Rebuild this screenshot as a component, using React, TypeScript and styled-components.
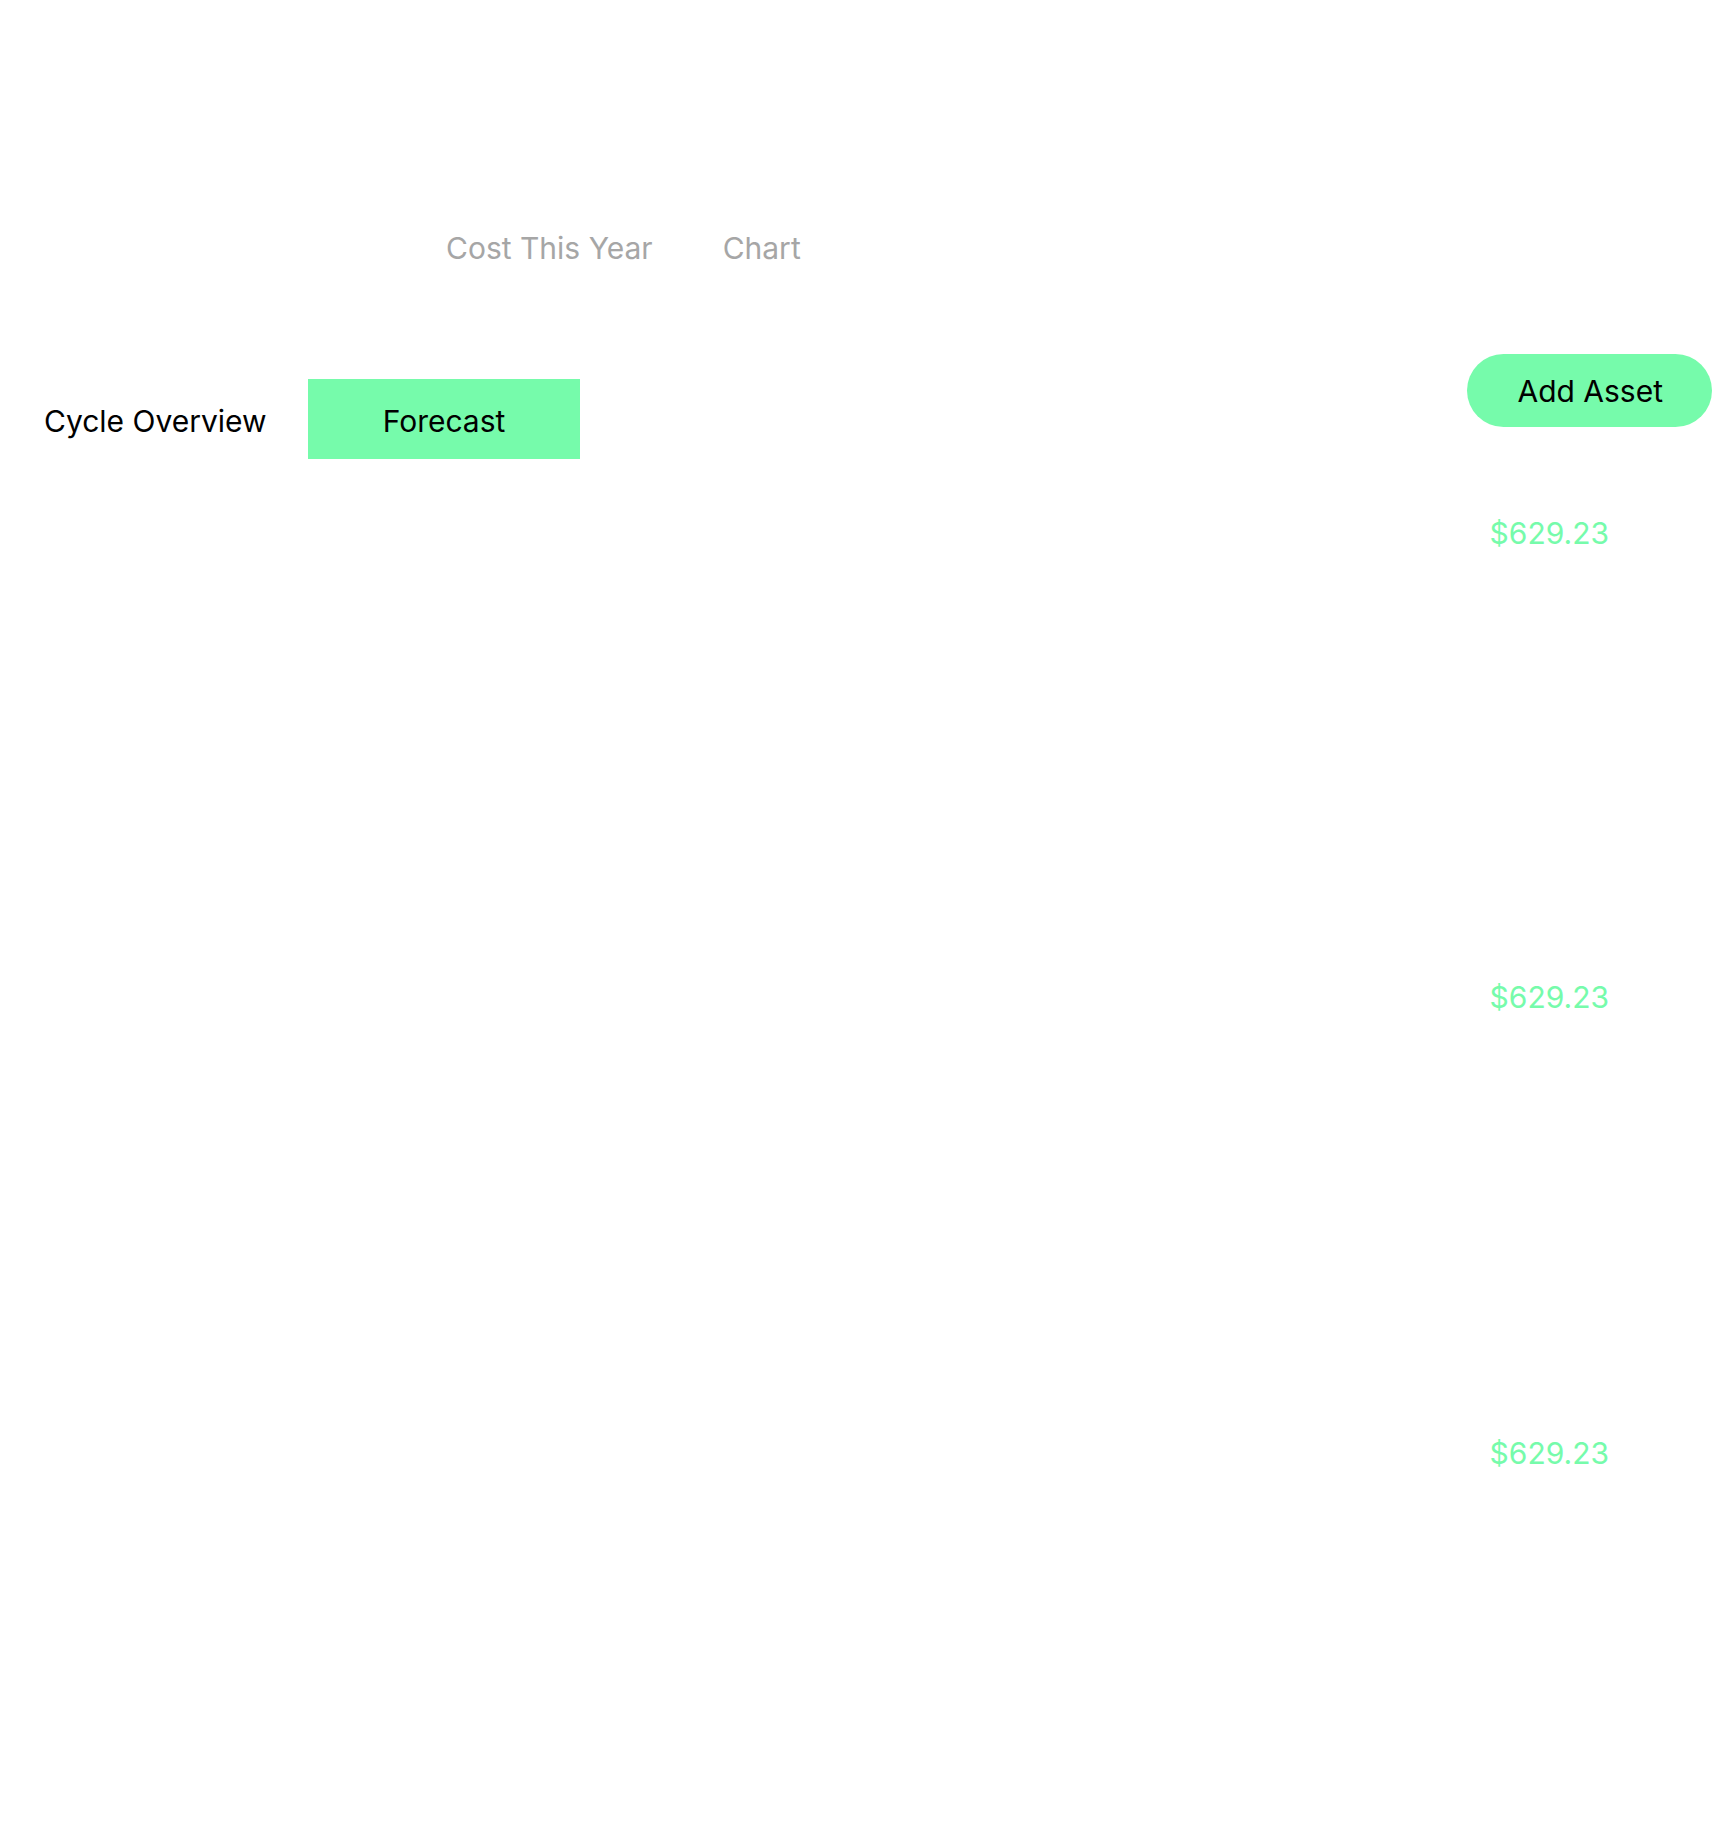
import React from "react";
import styled, { createGlobalStyle } from "styled-components";

const GlobalStyle = createGlobalStyle`
  html, body {
    margin: 0;
    padding: 0;
    background: #ffffff;
  }
  body {
    font-family: Inter, "Noto Sans", "Liberation Sans", sans-serif;
    color: #000;
  }
`;

const Page = styled.div`
  width: 1712px;
  min-height: 1835px;
  display: flex;
  flex-direction: column;
  box-sizing: border-box;
  padding-top: 230px;
`;

const SummaryBar = styled.div`
  display: flex;
  gap: 70px;
  padding-left: 446px;
`;

const SummaryLabel = styled.span`
  font-size: 30px;
  line-height: normal;
  color: #a6a6a6;
`;

const Toolbar = styled.div`
  display: flex;
  justify-content: space-between;
  align-items: flex-start;
  margin-top: 88px;
`;

const Tabs = styled.div`
  display: flex;
  gap: 41px;
  padding-left: 44px;
  margin-top: 25px;
`;

const Tab = styled.button<{ $active?: boolean }>`
  height: 80px;
  border: none;
  margin: 0;
  padding: 4px ${(p) => (p.$active ? "75px" : "0")} 0;
  background: ${(p) => (p.$active ? "#76fbab" : "transparent")};
  font-family: inherit;
  font-size: 30px;
  color: #000;
  cursor: pointer;
`;

const AddButton = styled.button`
  height: 73px;
  padding: 0 49px 0 50px;
  border: none;
  border-radius: 37px;
  background: #76fbab;
  font-family: inherit;
  font-size: 30px;
  color: #000;
  cursor: pointer;
`;

const List = styled.div`
  display: flex;
  flex-direction: column;
  padding-top: 56px;
`;

const Row = styled.div<{ $height?: number }>`
  display: flex;
  justify-content: flex-end;
  padding-right: 103px;
  height: ${(p) => (p.$height ? `${p.$height}px` : "auto")};
`;

const Amount = styled.span`
  font-size: 30px;
  line-height: normal;
  color: #76fbab;
`;

const rows = [464, 456, 0];

export default function App() {
  return (
    <>
      <GlobalStyle />
      <Page>
        <SummaryBar>
          <SummaryLabel>Cost This Year</SummaryLabel>
          <SummaryLabel>Chart</SummaryLabel>
        </SummaryBar>
        <Toolbar>
          <Tabs>
            <Tab>Cycle Overview</Tab>
            <Tab $active>Forecast</Tab>
          </Tabs>
          <AddButton>Add Asset</AddButton>
        </Toolbar>
        <List>
          {rows.map((h, i) => (
            <Row key={i} $height={h || undefined}>
              <Amount>$629.23</Amount>
            </Row>
          ))}
        </List>
      </Page>
    </>
  );
}
